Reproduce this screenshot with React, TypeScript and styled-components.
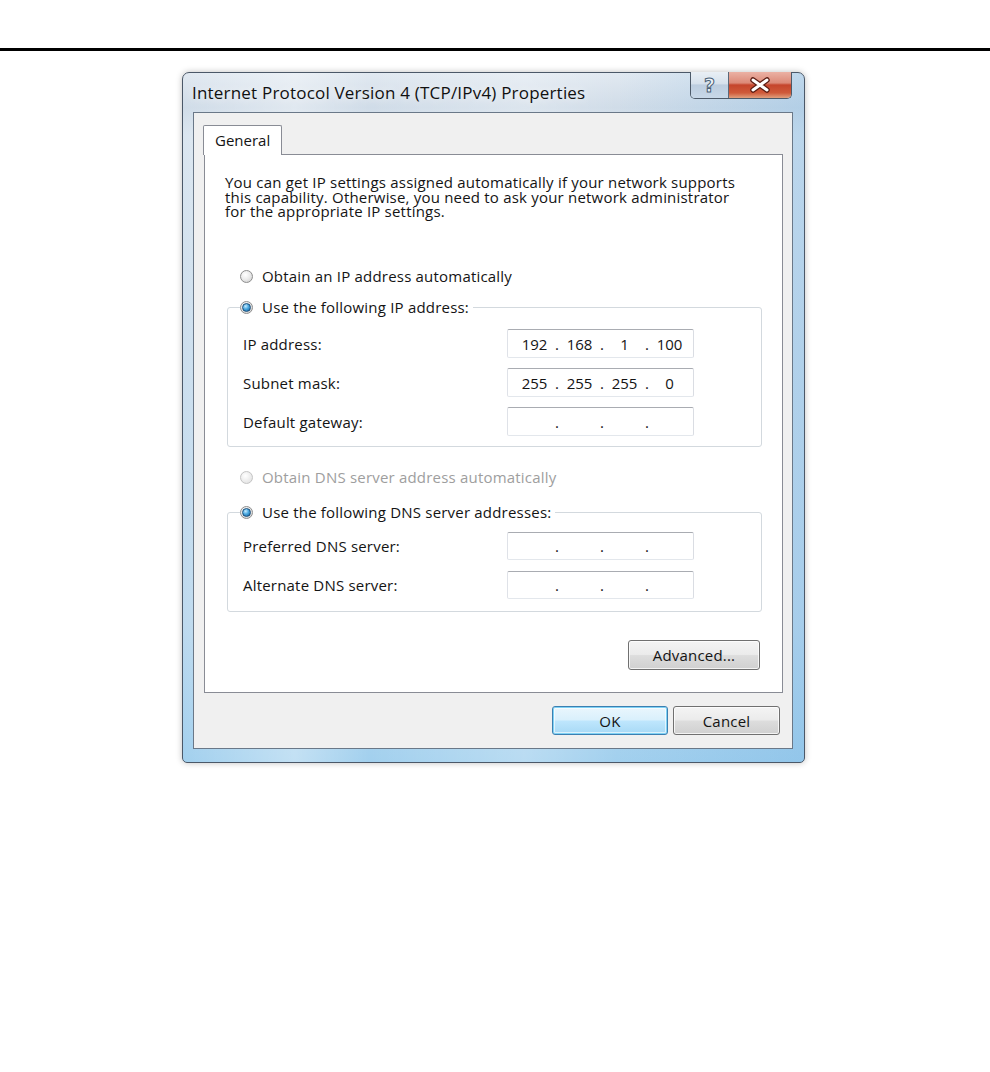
import React from "react";
import styled, { createGlobalStyle, css } from "styled-components";

const Global = createGlobalStyle`
  html, body { margin: 0; padding: 0; background: #ffffff; }
  body { font-family: "Open Sans", "Liberation Sans", sans-serif; color: #111; }
  * { box-sizing: border-box; }
`;

const Page = styled.div`
  width: 990px;
  height: 1072px;
  padding-top: 48px;
  background: #fff;
`;

const Rule = styled.div`
  height: 3px;
  background: #000;
`;

const Window = styled.div`
  margin: 21px 0 0 182px;
  width: 623px;
  border: 1px solid #4b5868;
  border-radius: 7px 7px 5px 5px;
  padding: 0 11px 13px 10px;
  background:
    linear-gradient(90deg, rgba(255,255,255,0) 0%, rgba(255,255,255,0.35) 18%, rgba(255,255,255,0) 30%, rgba(255,255,255,0.25) 55%, rgba(255,255,255,0) 70%, rgba(110,175,225,0.3) 100%),
    linear-gradient(180deg, #e1e9f1 0%, #d0dce8 5%, #dbe6f0 9%, #cddfee 40%, #bedaef 80%, #a2d0ee 100%);
  box-shadow: 0 0 6px rgba(0, 0, 0, 0.25);
`;

const TitleBar = styled.div`
  height: 39px;
  display: flex;
  align-items: center;
  justify-content: space-between;
`;

const TitleText = styled.div`
  margin-left: -1px;
  font-size: 17px;
  letter-spacing: 0.2px;
  color: #101010;
  white-space: nowrap;
  text-shadow: 0 0 8px rgba(255, 255, 255, 0.9);
`;

const CaptionGroup = styled.div`
  align-self: flex-start;
  margin-top: -1px;
  margin-right: 1px;
  display: flex;
  height: 27px;
  border: 1px solid #4d5a69;
  border-top: none;
  border-radius: 0 0 5px 5px;
  overflow: hidden;
`;

const CaptionButton = styled.div<{ $variant: "help" | "close" }>`
  height: 100%;
  display: flex;
  align-items: center;
  justify-content: center;
  ${(p) =>
    p.$variant === "help"
      ? css`
          width: 38px;
          border-right: 1px solid #5a6878;
          background: linear-gradient(180deg, #e9eff5 0%, #d6e1ec 45%, #bccddf 50%, #c8d8e8 100%);
        `
      : css`
          width: 62px;
          background: linear-gradient(180deg, #ebb1a4 0%, #dc8a78 42%, #c5452c 50%, #cf5a3a 80%, #e0a07e 100%);
        `}
`;

const HelpGlyph = styled.span`
  font-family: "DejaVu Sans", sans-serif;
  font-weight: bold;
  font-size: 19px;
  line-height: 1;
  color: #eef3f8;
  -webkit-text-stroke: 1px #4a5f76;
`;

const Client = styled.div`
  background: #f0f0f0;
  border: 1px solid #6a7888;
  height: 637px;
  display: flex;
  flex-direction: column;
  font-size: 15px;
  letter-spacing: 0.2px;
  color: #141414;
`;

const TabStrip = styled.div`
  display: flex;
  padding: 12px 0 0 9px;
`;

const Tab = styled.div`
  position: relative;
  z-index: 1;
  width: 79px;
  height: 30px;
  margin-bottom: -1px;
  border: 1px solid #898c95;
  border-bottom: none;
  border-radius: 2px 2px 0 0;
  background: #fff;
  padding-left: 11px;
  line-height: 28px;
  letter-spacing: 0;
`;

const Panel = styled.div`
  height: 539px;
  margin: 0 9px 0 10px;
  border: 1px solid #898c95;
  background: #fff;
  padding: 20px 20px 0 20px;
  display: flex;
  flex-direction: column;
`;

const Intro = styled.p`
  margin: 0;
  height: 44px;
  line-height: 14.5px;
  white-space: nowrap;
`;

const RadioRow = styled.div<{ $top: number; $disabled?: boolean }>`
  display: flex;
  align-items: center;
  gap: 9px;
  height: 18px;
  margin: ${(p) => p.$top}px 0 0 15px;
  white-space: nowrap;
  color: ${(p) => (p.$disabled ? "#9e9e9e" : "#141414")};
`;

const RadioDot = styled.span<{ $checked?: boolean; $disabled?: boolean }>`
  flex: none;
  width: 13px;
  height: 13px;
  border-radius: 50%;
  border: 1px solid ${(p) => (p.$disabled ? "#c4c4c4" : "#8d8d8d")};
  background: ${(p) =>
    p.$disabled
      ? "radial-gradient(circle at 40% 35%, #ffffff 0%, #eeeeee 50%, #dcdcdc 100%)"
      : "radial-gradient(circle at 40% 35%, #ffffff 0%, #ececec 45%, #c8c8c8 100%)"};
  display: flex;
  align-items: center;
  justify-content: center;
  &::after {
    content: "";
    display: ${(p) => (p.$checked ? "block" : "none")};
    width: 7px;
    height: 7px;
    border-radius: 50%;
    border: 1px solid #1b4e7a;
    background: radial-gradient(circle at 38% 32%, #c6ecff 0%, #4aa8e0 45%, #0f5a94 100%);
  }
`;

const Group = styled.fieldset<{ $top: number; $padTop: number; $padBottom: number; $gap: number }>`
  margin: ${(p) => p.$top}px 0 0 2px;
  min-width: 0;
  border: 1px solid #d3d9de;
  border-radius: 3px;
  padding: ${(p) => p.$padTop}px 67px ${(p) => p.$padBottom}px 15px;
  display: flex;
  flex-direction: column;
  gap: ${(p) => p.$gap}px;
`;

const Legend = styled.legend`
  margin-left: -3px;
  padding: 0 4px 0 0;
  height: 18px;
`;

const LegendInner = styled.span`
  display: flex;
  align-items: center;
  gap: 9px;
  height: 18px;
  white-space: nowrap;
`;

const FieldRow = styled.div<{ $height: number }>`
  display: flex;
  align-items: center;
  justify-content: space-between;
  height: ${(p) => p.$height}px;
`;

const FieldLabel = styled.span`
  white-space: nowrap;
`;

const IpBox = styled.div`
  width: 187px;
  height: 100%;
  border: 1px solid;
  border-color: #a9acb2 #dadde3 #e3e7ec #dfe2e8;
  border-radius: 2px;
  background: #fff;
  display: flex;
  align-items: center;
  padding-left: 6px;
  letter-spacing: 0;
`;

const Seg = styled.span`
  width: 41px;
  text-align: center;
`;

const Dot = styled.span`
  width: 4px;
  text-align: center;
`;

const PushButton = styled.button<{ $default?: boolean; $width: number; $height: number }>`
  width: ${(p) => p.$width}px;
  height: ${(p) => p.$height}px;
  font-family: "Open Sans", "Liberation Sans", sans-serif;
  font-size: 15px;
  letter-spacing: 0.2px;
  color: #141414;
  border-radius: 3px;
  padding: 0;
  ${(p) =>
    p.$default
      ? css`
          border: 1px solid #3c7fb1;
          background: linear-gradient(180deg, #eaf6fd 0%, #d9f0fc 48%, #bee6fd 52%, #a7d9f5 100%);
          box-shadow: inset 0 0 0 1px #7fd2f5, inset 0 0 0 2px rgba(255, 255, 255, 0.6);
        `
      : css`
          border: 1px solid #707070;
          background: linear-gradient(180deg, #f4f4f4 0%, #ebebeb 48%, #dddddd 52%, #d0d0d0 100%);
          box-shadow: inset 0 0 0 1px rgba(255, 255, 255, 0.75);
        `}
`;

const AdvancedRow = styled.div`
  display: flex;
  justify-content: flex-end;
  margin: 28px 2px 0 0;
`;

const ButtonBar = styled.div`
  display: flex;
  justify-content: flex-end;
  gap: 5px;
  padding: 13px 12px 0 0;
`;

type Segs = [string, string, string, string];

const IpField: React.FC<{ value: Segs }> = ({ value }) => (
  <IpBox>
    <Seg>{value[0]}</Seg>
    <Dot>.</Dot>
    <Seg>{value[1]}</Seg>
    <Dot>.</Dot>
    <Seg>{value[2]}</Seg>
    <Dot>.</Dot>
    <Seg>{value[3]}</Seg>
  </IpBox>
);

const CloseIcon = () => (
  <svg width="22" height="16" viewBox="0 0 22 16">
    <path d="M4 3 L18 13 M18 3 L4 13" stroke="#5b1c12" strokeWidth="5.5" strokeLinecap="round" fill="none" />
    <path d="M4 3 L18 13 M18 3 L4 13" stroke="#ffffff" strokeWidth="3" strokeLinecap="round" fill="none" />
  </svg>
);

export default function App() {
  const empty: Segs = ["", "", "", ""];
  return (
    <Page>
      <Global />
      <Rule />
      <Window>
        <TitleBar>
          <TitleText>Internet Protocol Version 4 (TCP/IPv4) Properties</TitleText>
          <CaptionGroup>
            <CaptionButton $variant="help">
              <HelpGlyph>?</HelpGlyph>
            </CaptionButton>
            <CaptionButton $variant="close">
              <CloseIcon />
            </CaptionButton>
          </CaptionGroup>
        </TitleBar>
        <Client>
          <TabStrip>
            <Tab>General</Tab>
          </TabStrip>
          <Panel>
            <Intro>
              You can get IP settings assigned automatically if your network supports
              <br />
              this capability. Otherwise, you need to ask your network administrator
              <br />
              for the appropriate IP settings.
            </Intro>
            <RadioRow $top={48}>
              <RadioDot />
              Obtain an IP address automatically
            </RadioRow>
            <Group $top={13} $padTop={13} $padBottom={10} $gap={10}>
              <Legend>
                <LegendInner>
                  <RadioDot $checked />
                  Use the following IP address:
                </LegendInner>
              </Legend>
              <FieldRow $height={29}>
                <FieldLabel>IP address:</FieldLabel>
                <IpField value={["192", "168", "1", "100"]} />
              </FieldRow>
              <FieldRow $height={29}>
                <FieldLabel>Subnet mask:</FieldLabel>
                <IpField value={["255", "255", "255", "0"]} />
              </FieldRow>
              <FieldRow $height={29}>
                <FieldLabel>Default gateway:</FieldLabel>
                <IpField value={empty} />
              </FieldRow>
            </Group>
            <RadioRow $top={21} $disabled>
              <RadioDot $disabled />
              Obtain DNS server address automatically
            </RadioRow>
            <Group $top={17} $padTop={11} $padBottom={12} $gap={11}>
              <Legend>
                <LegendInner>
                  <RadioDot $checked />
                  Use the following DNS server addresses:
                </LegendInner>
              </Legend>
              <FieldRow $height={28}>
                <FieldLabel>Preferred DNS server:</FieldLabel>
                <IpField value={empty} />
              </FieldRow>
              <FieldRow $height={28}>
                <FieldLabel>Alternate DNS server:</FieldLabel>
                <IpField value={empty} />
              </FieldRow>
            </Group>
            <AdvancedRow>
              <PushButton $width={132} $height={30}>Advanced...</PushButton>
            </AdvancedRow>
          </Panel>
          <ButtonBar>
            <PushButton $default $width={116} $height={29}>OK</PushButton>
            <PushButton $width={107} $height={29}>Cancel</PushButton>
          </ButtonBar>
        </Client>
      </Window>
    </Page>
  );
}
